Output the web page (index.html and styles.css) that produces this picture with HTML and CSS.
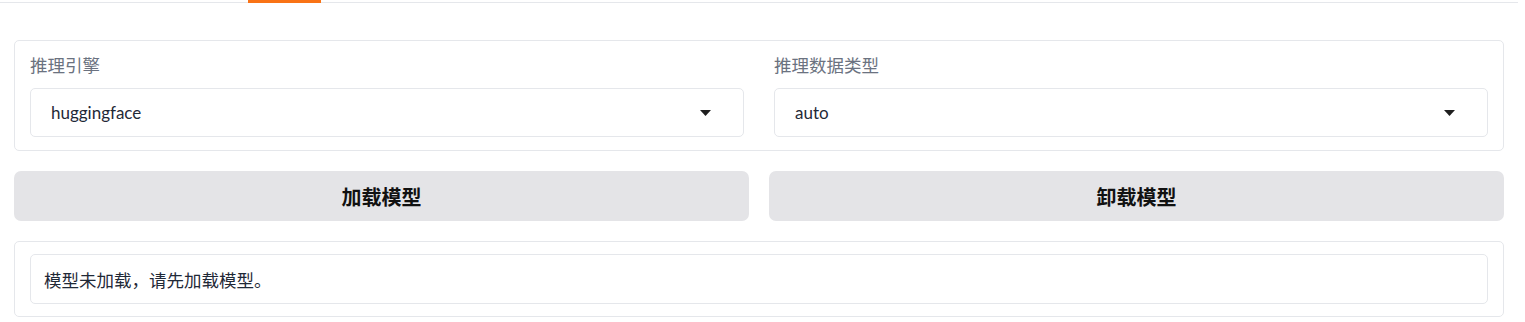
FILE: index.html
```html
<!DOCTYPE html>
<html lang="zh">
<head>
<meta charset="utf-8">
<link rel="stylesheet" href="styles.css">
</head>
<body>
<div class="app">
  <div class="tabbar"><span class="tab-active"></span></div>
  <div class="content">
    <div class="panel row">
      <div class="field">
        <div class="label">推理引擎</div>
        <div class="select">
          <span class="value">huggingface</span>
          <svg class="caret" width="11" height="6" viewBox="0 0 11 6"><path d="M0 0H11L5.5 6Z" fill="#1f1f1f"/></svg>
        </div>
      </div>
      <div class="field">
        <div class="label">推理数据类型</div>
        <div class="select">
          <span class="value">auto</span>
          <svg class="caret" width="11" height="6" viewBox="0 0 11 6"><path d="M0 0H11L5.5 6Z" fill="#1f1f1f"/></svg>
        </div>
      </div>
    </div>
    <div class="buttons">
      <button class="btn">加载模型</button>
      <button class="btn">卸载模型</button>
    </div>
    <div class="panel status">
      <div class="textbox">模型未加载，请先加载模型。</div>
    </div>
  </div>
</div>
</body>
</html>
```
FILE: styles.css
```css
* { box-sizing: border-box; }
html, body { margin: 0; padding: 0; background: #ffffff; }
body {
  font-family: "Lato", "Noto Sans CJK SC", sans-serif;
  color: #1f2937;
}
.app { width: 1518px; }
.tabbar {
  height: 3px;
  border-bottom: 1px solid #e5e7eb;
  padding-left: 248px;
  display: flex;
}
.tab-active {
  width: 73px;
  height: 3px;
  background: #f97316;
}
.content {
  padding: 37px 14px 0 14px;
  display: flex;
  flex-direction: column;
  gap: 20px;
}
.panel {
  border: 1px solid #e5e7eb;
  border-radius: 5px;
  background: #fff;
}
.row {
  display: grid;
  grid-template-columns: 1fr 1fr;
  gap: 30px;
  padding: 12px 15px 13px 15px;
}
.field { display: flex; flex-direction: column; gap: 10px; }
.label {
  font-size: 17.5px;
  line-height: 25px;
  color: #6b7280;
}
.select {
  height: 49px;
  border: 1px solid #e5e7eb;
  border-radius: 5px;
  display: flex;
  align-items: center;
  justify-content: space-between;
  padding: 0 32px 0 20px;
}
.value { font-size: 17px; color: #1f2937; }
.caret { display: block; }
.buttons {
  display: grid;
  grid-template-columns: 1fr 1fr;
  gap: 20px;
}
.btn {
  height: 50px;
  border: none;
  border-radius: 7px;
  background: #e4e4e7;
  font-family: "Noto Sans CJK SC", "Lato", sans-serif;
  font-weight: 700;
  font-size: 20px;
  color: #111111;
  padding: 0;
}
.status { padding: 12px 15px; }
.textbox {
  height: 50px;
  border: 1px solid #e5e7eb;
  border-radius: 5px;
  padding: 0 13px;
  display: flex;
  align-items: center;
  font-size: 17.5px;
  color: #1f2937;
}
```
